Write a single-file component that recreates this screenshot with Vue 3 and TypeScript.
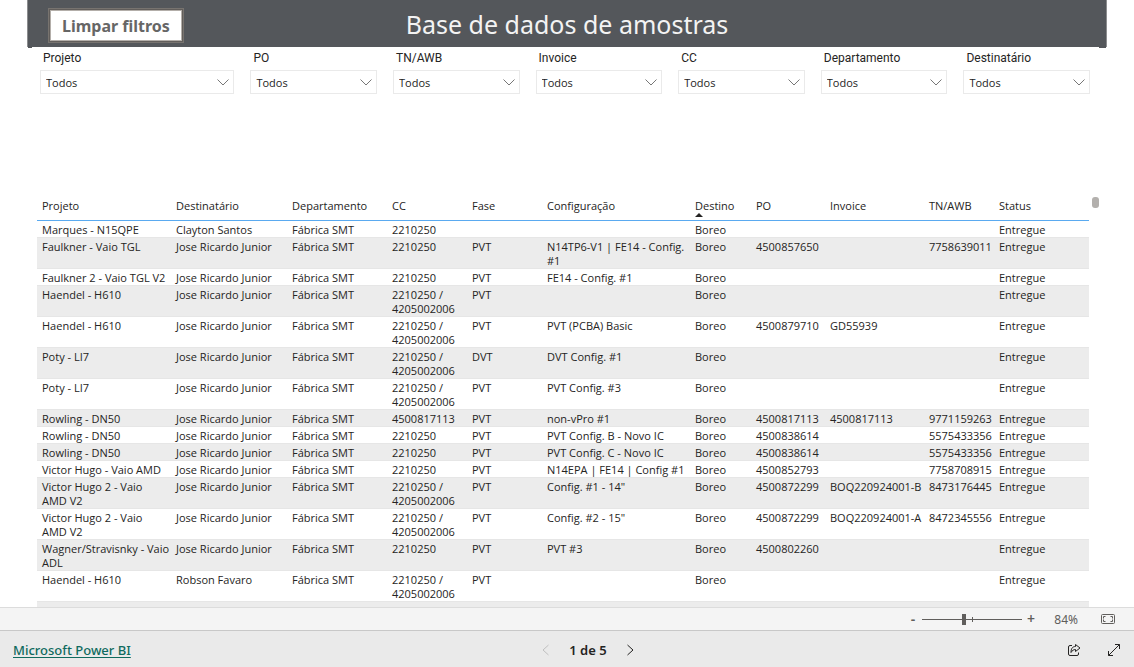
<script setup lang="ts">
import { ref } from 'vue'

interface Filter {
  id: string
  label: string
}

interface Column {
  title: string
  weight: number
  sorted?: boolean
}

const filters: Filter[] = [
  { id: 'projeto', label: 'Projeto' },
  { id: 'po', label: 'PO' },
  { id: 'tn-awb', label: 'TN/AWB' },
  { id: 'invoice', label: 'Invoice' },
  { id: 'cc', label: 'CC' },
  { id: 'departamento', label: 'Departamento' },
  { id: 'destinatario', label: 'Destinatário' },
]

const columns: Column[] = [
  { title: 'Projeto', weight: 134 },
  { title: 'Destinatário', weight: 116 },
  { title: 'Departamento', weight: 100 },
  { title: 'CC', weight: 80 },
  { title: 'Fase', weight: 75 },
  { title: 'Configuração', weight: 148 },
  { title: 'Destino', weight: 61, sorted: true },
  { title: 'PO', weight: 74 },
  { title: 'Invoice', weight: 99 },
  { title: 'TN/AWB', weight: 70 },
  { title: 'Status', weight: 95 },
]

const totalWeight = columns.reduce((sum, c) => sum + c.weight, 0)
const columnWidth = (c: Column): string => `${(c.weight / totalWeight) * 100}%`

const jose = 'Jose Ricardo Junior'
const smt = 'Fábrica SMT'
const twoCenters = '2210250 /\n4205002006'

const rows: string[][] = [
  ['Marques - N15QPE', 'Clayton Santos', smt, '2210250', '', '', 'Boreo', '', '', '', 'Entregue'],
  ['Faulkner - Vaio TGL', jose, smt, '2210250', 'PVT', 'N14TP6-V1 | FE14 - Config.\n#1', 'Boreo', '4500857650', '', '7758639011', 'Entregue'],
  ['Faulkner 2 - Vaio TGL V2', jose, smt, '2210250', 'PVT', 'FE14 - Config. #1', 'Boreo', '', '', '', 'Entregue'],
  ['Haendel - H610', jose, smt, twoCenters, 'PVT', '', 'Boreo', '', '', '', 'Entregue'],
  ['Haendel - H610', jose, smt, twoCenters, 'PVT', 'PVT (PCBA) Basic', 'Boreo', '4500879710', 'GD55939', '', 'Entregue'],
  ['Poty - LI7', jose, smt, twoCenters, 'DVT', 'DVT Config. #1', 'Boreo', '', '', '', 'Entregue'],
  ['Poty - LI7', jose, smt, twoCenters, 'PVT', 'PVT Config. #3', 'Boreo', '', '', '', 'Entregue'],
  ['Rowling - DN50', jose, smt, '4500817113', 'PVT', 'non-vPro #1', 'Boreo', '4500817113', '4500817113', '9771159263', 'Entregue'],
  ['Rowling - DN50', jose, smt, '2210250', 'PVT', 'PVT Config. B - Novo IC', 'Boreo', '4500838614', '', '5575433356', 'Entregue'],
  ['Rowling - DN50', jose, smt, '2210250', 'PVT', 'PVT Config. C - Novo IC', 'Boreo', '4500838614', '', '5575433356', 'Entregue'],
  ['Victor Hugo - Vaio AMD', jose, smt, '2210250', 'PVT', 'N14EPA | FE14 | Config #1', 'Boreo', '4500852793', '', '7758708915', 'Entregue'],
  ['Victor Hugo 2 - Vaio\nAMD V2', jose, smt, twoCenters, 'PVT', 'Config. #1 - 14"', 'Boreo', '4500872299', 'BOQ220924001-B', '8473176445', 'Entregue'],
  ['Victor Hugo 2 - Vaio\nAMD V2', jose, smt, twoCenters, 'PVT', 'Config. #2 - 15"', 'Boreo', '4500872299', 'BOQ220924001-A', '8472345556', 'Entregue'],
  ['Wagner/Stravisnky - Vaio\nADL', jose, smt, '2210250', 'PVT', 'PVT #3', 'Boreo', '4500802260', '', '', 'Entregue'],
  ['Haendel - H610', 'Robson Favaro', smt, twoCenters, 'PVT', '', 'Boreo', '', '', '', 'Entregue'],
  ['', '', '', '', '', '', '', '', '', '', ''],
]

const zoom = ref(84)
</script>

<template>
  <div class="app">
    <main class="report">
      <header class="banner">
        <button class="clear" type="button">Limpar filtros</button>
        <h1 class="title">Base de dados de amostras</h1>
      </header>

      <section class="filters">
        <div v-for="f in filters" :key="f.id" class="filter">
          <label :for="f.id">{{ f.label }}</label>
          <div class="picker">
            <select :id="f.id">
              <option>Todos</option>
            </select>
            <svg class="chevron" viewBox="0 0 12 7" aria-hidden="true">
              <path d="M0.5 0.5 6 6 11.5 0.5" />
            </svg>
          </div>
        </div>
      </section>

      <section class="grid">
        <table>
          <colgroup>
            <col v-for="c in columns" :key="c.title" :style="{ width: columnWidth(c) }" />
          </colgroup>
          <thead>
            <tr>
              <th v-for="c in columns" :key="c.title" scope="col">
                {{ c.title }}
                <svg v-if="c.sorted" class="sort" viewBox="0 0 8 4" aria-hidden="true">
                  <path d="M0 4 4 0 8 4Z" />
                </svg>
              </th>
            </tr>
          </thead>
          <tbody>
            <tr v-for="(row, r) in rows" :key="r">
              <td v-for="(cell, c) in row" :key="c">{{ cell }}</td>
            </tr>
          </tbody>
        </table>
        <div class="scroll-thumb"></div>
      </section>
    </main>

    <div class="zoombar">
      <button class="step" type="button" aria-label="Reduzir">-</button>
      <input v-model.number="zoom" type="range" min="0" max="200" aria-label="Zoom" />
      <button class="step" type="button" aria-label="Ampliar">+</button>
      <span class="percent">{{ zoom }}%</span>
      <button class="fit" type="button" aria-label="Ajustar à página">
        <svg width="14" height="12" viewBox="0 0 14 12" aria-hidden="true">
          <rect x="0.5" y="1.5" width="13" height="9" rx="1" />
          <path d="M4.5 3.5h-2v2M2.5 6.5v2h2M9.5 3.5h2v2M11.5 6.5v2h-2" />
        </svg>
      </button>
    </div>

    <footer class="footer">
      <a class="brand" href="#">Microsoft Power BI</a>
      <nav class="pager">
        <button type="button" disabled aria-label="Página anterior">
          <svg width="7" height="12" viewBox="0 0 7 12" aria-hidden="true"><path d="M6.5 1 1 6l5.5 5" /></svg>
        </button>
        <span>1 de 5</span>
        <button type="button" aria-label="Próxima página">
          <svg width="7" height="12" viewBox="0 0 7 12" aria-hidden="true"><path d="M0.5 1 6 6l-5.5 5" /></svg>
        </button>
      </nav>
      <div class="actions">
        <button type="button" aria-label="Compartilhar">
          <svg width="14" height="14" viewBox="0 0 14 14" aria-hidden="true">
            <path d="M5 2.5H3A1.5 1.5 0 0 0 1.5 4v7A1.5 1.5 0 0 0 3 12.5h7A1.5 1.5 0 0 0 11.5 11V9.5" />
            <path d="M8.5 1.5v2C5.5 3.5 4 5.5 4 9.5c1.2-2 2.5-3 4.5-3v2L13 5Z" />
          </svg>
        </button>
        <button type="button" aria-label="Tela inteira">
          <svg width="14" height="14" viewBox="0 0 14 14" aria-hidden="true">
            <path d="M1.5 12.5 12.5 1.5M8 1.5h4.5V6M1.5 8v4.5H6" />
          </svg>
        </button>
      </div>
    </footer>
  </div>
</template>

<style>
body {
  margin: 0;
}
</style>

<style scoped>
.app {
  display: flex;
  flex-direction: column;
  height: 100vh;
  background: #fff;
  color: #252423;
  font-family: "Noto Sans", "Open Sans", sans-serif;
  font-size: 11px;
}

button {
  margin: 0;
  padding: 0;
  border: 0;
  background: none;
  color: inherit;
  font-family: inherit;
}

svg {
  display: block;
  fill: none;
  stroke: currentColor;
}

.report {
  flex: 1;
  min-height: 0;
  overflow: hidden;
}

.banner {
  position: relative;
  display: grid;
  grid-template-columns: 1fr auto 1fr;
  align-items: center;
  height: 47px;
  margin: 0 27px;
  padding: 0 20px;
  border: solid #8c8d8f;
  border-width: 0 1px;
  background: #54575b;
}

/* Corner tabs under the banner */
.banner::before,
.banner::after {
  content: "";
  position: absolute;
  top: 100%;
  width: 4px;
  height: 1px;
  background: #54575b;
}

.banner::before {
  left: 0;
}

.banner::after {
  right: 0;
  width: 7px;
}

.clear {
  justify-self: start;
  height: 35px;
  margin-top: 4px;
  padding: 0 12px;
  border: 2px solid #625e5b;
  outline: 1px solid #77736f;
  outline-offset: -1px;
  background: #fff;
  box-shadow: inset 0 0 0 1px #b3aea9;
  color: #666;
  font-size: 16px;
  font-weight: 700;
}

.title {
  margin: 0;
  color: #f3f3f3;
  font-size: 25px;
  font-weight: 400;
  line-height: 46px;
}

.filters {
  display: grid;
  grid-template-columns: 195fr repeat(6, 127fr);
  gap: 16px;
  padding: 3px 44px 0 40px;
}

.filter label {
  display: block;
  padding-left: 3px;
  font-family: Roboto, sans-serif;
  font-size: 12px;
  line-height: 16px;
}

.picker {
  position: relative;
  margin-top: 4px;
}

.picker select {
  display: block;
  width: 100%;
  height: 24px;
  padding: 0 5px;
  border: 1px solid #eaeaea;
  border-radius: 0;
  background: #fff;
  color: inherit;
  font-family: "Open Sans", sans-serif;
  font-size: 11px;
  appearance: none;
}

.chevron {
  position: absolute;
  top: 9px;
  right: 5px;
  width: 12px;
  height: 7px;
  color: #777;
  pointer-events: none;
}

.grid {
  display: flex;
  align-items: flex-start;
  gap: 3px;
  padding: 103px 35px 0 37px;
}

table {
  flex: 1;
  width: 100%;
  border-collapse: separate;
  border-spacing: 0;
  font-family: "Open Sans", sans-serif;
  table-layout: fixed;
}

th {
  position: relative;
  height: 23px;
  padding: 0 0 0 5px;
  border-bottom: 1px solid #5aaaf0;
  font-weight: 400;
  line-height: 18px;
  text-align: left;
  vertical-align: top;
}

.sort {
  position: absolute;
  bottom: 3px;
  left: 5px;
  width: 8px;
  height: 4px;
  fill: #252423;
  stroke: none;
}

td {
  height: 14px;
  padding: 2px 0 0 5px;
  border-bottom: 1px solid #e6e6e6;
  line-height: 14px;
  vertical-align: top;
  white-space: pre;
}

tbody tr:nth-child(even) td {
  background: #ececec;
}

.scroll-thumb {
  width: 7px;
  height: 11px;
  border-radius: 3px;
  background: #b3b0ad;
}

.zoombar {
  display: flex;
  align-items: center;
  justify-content: flex-end;
  height: 22px;
  padding-right: 19px;
  border-top: 1px solid #dcdcdc;
  background: #f4f4f4;
  color: #605e5c;
}

.step {
  width: 18px;
  font-size: 14px;
  font-weight: 600;
  line-height: 20px;
}

.zoombar input {
  width: 100px;
  height: 12px;
  margin: 0;
  appearance: none;
  background:
    linear-gradient(#605e5c, #605e5c) center / 100% 1px no-repeat,
    linear-gradient(#605e5c, #605e5c) center / 1px 5px no-repeat;
}

.zoombar input::-webkit-slider-thumb {
  width: 4px;
  height: 11px;
  appearance: none;
  background: #605e5c;
}

.percent {
  width: 38px;
  font-size: 12px;
  text-align: right;
}

.fit {
  margin-left: 23px;
}

.footer {
  display: grid;
  grid-template-columns: 1fr auto 1fr;
  align-items: center;
  height: 37px;
  padding: 2px 13px 0;
  box-sizing: border-box;
  border-top: 1px solid #c8c8c8;
  background: #eaeaea;
}

.brand {
  justify-self: start;
  color: #0f6a5e;
  font-size: 13px;
  font-weight: 500;
  text-underline-offset: 2px;
}

.pager {
  display: flex;
  align-items: center;
  gap: 20px;
  padding-left: 42px;
  color: #252423;
  font-size: 13px;
  font-weight: 600;
}

.pager button:disabled {
  color: #c0c0c0;
}

.actions {
  display: flex;
  justify-self: end;
  gap: 26px;
  color: #252423;
}
</style>
